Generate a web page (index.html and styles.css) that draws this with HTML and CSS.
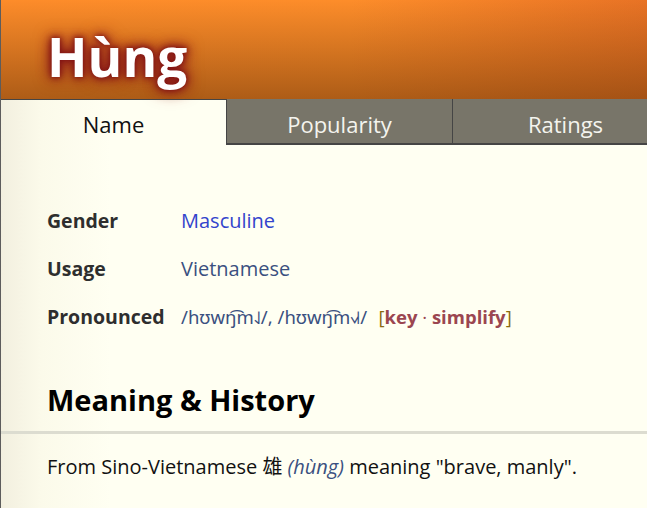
FILE: index.html
```html
<!DOCTYPE html>
<html lang="en">
<head>
<meta charset="utf-8">
<title>Hùng</title>
<link rel="stylesheet" href="styles.css">
</head>
<body>
<div class="page">
  <header class="banner">
    <h1 class="name-title">Hùng</h1>
  </header>
  <nav class="tabs">
    <div class="tab active">Name</div>
    <div class="tab">Popularity</div>
    <div class="tab">Ratings</div>
  </nav>
  <main class="content">
    <div class="info">
      <div class="label">Gender</div>
      <div class="value masc">Masculine</div>
      <div class="label">Usage</div>
      <div class="value usage">Vietnamese</div>
      <div class="label">Pronounced</div>
      <div class="value ipa"><span class="ipa-text">/hʊwŋ͡m˨˩/, /hʊwŋ͡m˧˩˧/</span> <span class="links"><span class="br">[</span><b>key</b> <span class="dot">·</span> <b>simplify</b><span class="br">]</span></span></div>
    </div>
    <h2 class="section">Meaning &amp; History</h2>
  </main>
  <hr class="rule">
  <p class="text">From Sino-Vietnamese <span class="cjk">雄</span> <i class="trans">(hùng)</i> meaning "brave, manly".</p>
</div>
</body>
</html>
```

FILE: styles.css
```css
html, body {
  margin: 0;
  padding: 0;
  height: 100%;
  overflow: hidden;
}
body {
  font-family: "Open Sans", "Noto Sans", "DejaVu Sans", sans-serif;
  background: #fffff2;
}
.page {
  min-height: 100%;
  border-left: 1px solid #5c5c5c;
  background: linear-gradient(to right, #f2efdf 0px, #fbfaea 40px, #fffff2 110px);
  width: 700px;
}
.banner {
  height: 99px;
  background:
    linear-gradient(to bottom, rgba(255,140,40,0) 0%, rgba(120,60,10,0.6) 100%),
    linear-gradient(to right, #fd8c2a 0%, #fd8d2a 50%, #e46e24 100%);
  padding-left: 46px;
  box-sizing: border-box;
}
.name-title {
  margin: 0;
  padding-top: 21px;
  font-size: 53px;
  line-height: 72px;
  font-weight: 700;
  color: #ffffff;
  text-shadow: 0 0 5px #7e1212, 0 0 9px #8a1a1a, 0 0 14px #8a1a1a, 0 0 18px rgba(138,26,26,0.7);
}
.tabs {
  display: flex;
  height: 46px;
}
.tab {
  width: 226px;
  box-sizing: border-box;
  text-align: center;
  font-size: 22px;
  line-height: 44px;
  padding-top: 3px;
  color: #f4f4ee;
  background: #787569;
  border-left: 1px solid #454545;
  border-bottom: 2px solid #454545;
  flex: none;
}
.tab.active {
  background: transparent;
  color: #111111;
  border-left: none;
  border-bottom: none;
  border-top: 1px solid #454545;
  width: 225px;
  padding-top: 2px;
}
.content {
  padding: 52px 0 0 46px;
}
.info {
  display: grid;
  grid-template-columns: 134px auto;
  font-size: 20px;
  line-height: 48px;
}
.label {
  font-weight: 700;
  color: #2e2e2e;
  font-size: 19.5px;
}
.masc { color: #3344cc; }
.usage { color: #3a5080; }
.ipa { color: #3a5080; white-space: nowrap; }
.ipa-text {
  font-family: "Noto Sans", "Open Sans", "DejaVu Sans", sans-serif;
  font-size: 18.5px;
}
.links { margin-left: 6px; font-size: 18.5px; }
.br { color: #8a6a10; }
.links b { color: #9b4650; font-weight: 700; }
.dot { color: #9b4650; }
.section {
  margin: 37px 0 0 0;
  font-size: 29px;
  line-height: 44px;
  font-weight: 700;
  color: #000;
}
.rule {
  margin: 9px 0 0 0;
  height: 3px;
  border: none;
  background: #dcdcd0;
}
.text {
  margin: 18px 0 0 46px;
  font-size: 20px;
  line-height: 28px;
  color: #111;
}
.cjk { font-family: "Noto Sans CJK SC", sans-serif; }
.trans { color: #3a5080; }
```
